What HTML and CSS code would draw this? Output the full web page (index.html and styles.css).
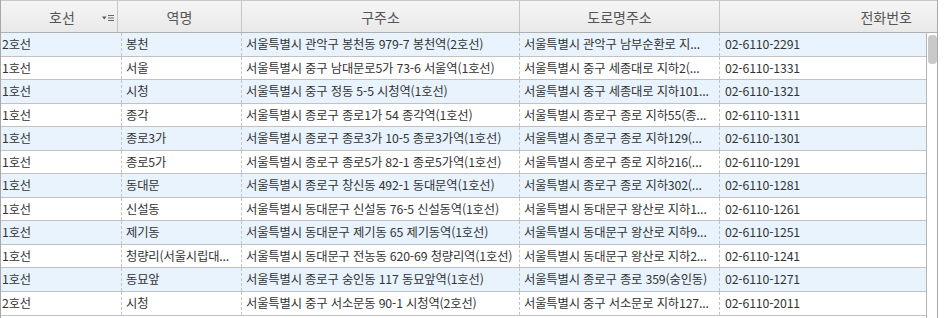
FILE: index.html
```html
<!DOCTYPE html>
<html lang="ko">
<head>
<meta charset="utf-8">
<title>지하철역 목록</title>
<link rel="stylesheet" href="styles.css">
</head>
<body>
<div class="grid">
  <div class="header">
    <div class="hcell hcell-line">호선
      <svg class="filter" width="12" height="8" viewBox="0 0 12 8" aria-hidden="true">
        <path d="M0 2.5h4.5L2.25 5.5z" fill="#555"/>
        <rect x="6" y="1" width="6" height="1" fill="#666"/>
        <rect x="6" y="3.5" width="6" height="1" fill="#666"/>
        <rect x="6" y="6" width="6" height="1" fill="#666"/>
      </svg>
    </div>
    <div class="hcell">역명</div>
    <div class="hcell">구주소</div>
    <div class="hcell">도로명주소</div>
    <div class="hcell hcell-phone">전화번호</div>
  </div>
  <div class="body">
    <div class="rows">
      <div class="row alt"><div class="cell">2호선</div><div class="cell">봉천</div><div class="cell">서울특별시 관악구 봉천동 979-7 봉천역(2호선)</div><div class="cell">서울특별시 관악구 남부순환로 지...</div><div class="cell">02-6110-2291</div></div>
      <div class="row"><div class="cell">1호선</div><div class="cell">서울</div><div class="cell">서울특별시 중구 남대문로5가 73-6 서울역(1호선)</div><div class="cell">서울특별시 중구 세종대로 지하2(...</div><div class="cell">02-6110-1331</div></div>
      <div class="row alt"><div class="cell">1호선</div><div class="cell">시청</div><div class="cell">서울특별시 중구 정동 5-5 시청역(1호선)</div><div class="cell">서울특별시 중구 세종대로 지하101...</div><div class="cell">02-6110-1321</div></div>
      <div class="row"><div class="cell">1호선</div><div class="cell">종각</div><div class="cell">서울특별시 종로구 종로1가 54 종각역(1호선)</div><div class="cell">서울특별시 종로구 종로 지하55(종...</div><div class="cell">02-6110-1311</div></div>
      <div class="row alt"><div class="cell">1호선</div><div class="cell">종로3가</div><div class="cell">서울특별시 종로구 종로3가 10-5 종로3가역(1호선)</div><div class="cell">서울특별시 종로구 종로 지하129(...</div><div class="cell">02-6110-1301</div></div>
      <div class="row"><div class="cell">1호선</div><div class="cell">종로5가</div><div class="cell">서울특별시 종로구 종로5가 82-1 종로5가역(1호선)</div><div class="cell">서울특별시 종로구 종로 지하216(...</div><div class="cell">02-6110-1291</div></div>
      <div class="row alt"><div class="cell">1호선</div><div class="cell">동대문</div><div class="cell">서울특별시 종로구 창신동 492-1 동대문역(1호선)</div><div class="cell">서울특별시 종로구 종로 지하302(...</div><div class="cell">02-6110-1281</div></div>
      <div class="row"><div class="cell">1호선</div><div class="cell">신설동</div><div class="cell">서울특별시 동대문구 신설동 76-5 신설동역(1호선)</div><div class="cell">서울특별시 동대문구 왕산로 지하1...</div><div class="cell">02-6110-1261</div></div>
      <div class="row alt"><div class="cell">1호선</div><div class="cell">제기동</div><div class="cell">서울특별시 동대문구 제기동 65 제기동역(1호선)</div><div class="cell">서울특별시 동대문구 왕산로 지하9...</div><div class="cell">02-6110-1251</div></div>
      <div class="row"><div class="cell">1호선</div><div class="cell">청량리(서울시립대...</div><div class="cell">서울특별시 동대문구 전농동 620-69 청량리역(1호선)</div><div class="cell">서울특별시 동대문구 왕산로 지하2...</div><div class="cell">02-6110-1241</div></div>
      <div class="row alt"><div class="cell">1호선</div><div class="cell">동묘앞</div><div class="cell">서울특별시 종로구 숭인동 117 동묘앞역(1호선)</div><div class="cell">서울특별시 종로구 종로 359(숭인동)</div><div class="cell">02-6110-1271</div></div>
      <div class="row"><div class="cell">2호선</div><div class="cell">시청</div><div class="cell">서울특별시 중구 서소문동 90-1 시청역(2호선)</div><div class="cell">서울특별시 중구 서소문로 지하127...</div><div class="cell">02-6110-2011</div></div>
    </div>
    <div class="scrollbar"><div class="thumb"></div></div>
  </div>
</div>
</body>
</html>
```

FILE: styles.css
```css
html, body {
  margin: 0;
  padding: 0;
  background: #ffffff;
  overflow: hidden;
}

body {
  font-family: "Noto Sans CJK KR", "Noto Sans", sans-serif;
  font-size: 12.3px;
  letter-spacing: -0.15px;
  color: #333333;
}

.grid {
  width: 936px;
  height: 318px;
  border-left: 1px solid #a8a8a8;
  border-right: 1px solid #a8a8a8;
  display: flex;
  flex-direction: column;
  overflow: hidden;
}

.header {
  display: grid;
  grid-template-columns: 117px 124px 278px 200px 1fr;
  height: 31px;
  flex: none;
  border-top: 1px solid #c8c8c8;
  border-bottom: 1px solid #b0b0b0;
  background: linear-gradient(#f5f5f5, #e9e9e9);
  color: #555555;
  font-size: 14px;
  letter-spacing: 0;
}

.hcell {
  display: flex;
  align-items: center;
  justify-content: center;
  border-right: 1px solid #c6c6c6;
  position: relative;
}

.hcell-line {
  padding-left: 6px;
}

.hcell-phone {
  justify-content: flex-end;
  padding-right: 25px;
  border-right: none;
}

.filter {
  position: absolute;
  right: 3px;
  top: 13px;
}

.body {
  display: flex;
  flex: 1;
  min-height: 0;
}

.rows {
  flex: 1;
  min-width: 0;
}

.row {
  display: grid;
  grid-template-columns: 121px 120px 278px 200px 1fr;
  height: 23.55px;
  box-sizing: border-box;
  border-bottom: 1px solid #c2c2c2;
  background: #ffffff;
}

.row.alt {
  background: #e8f3fd;
}

.cell {
  padding: 0 1px 0 4px;
  line-height: 22.5px;
  white-space: nowrap;
  overflow: hidden;
  text-overflow: ellipsis;
  border-right: 1px dashed #c4c4c4;
}

.cell:first-child {
  padding-left: 1px;
}

.cell:last-child {
  border-right: none;
  padding-left: 5px;
}

.scrollbar {
  width: 11px;
  flex: none;
  border-left: 1px solid #b4b4b4;
  background: #ffffff;
  padding: 2px 1px 0 1px;
  box-sizing: border-box;
}

.thumb {
  width: 9px;
  height: 29px;
  border-radius: 4px;
  background: #c9c9c9;
}
```
